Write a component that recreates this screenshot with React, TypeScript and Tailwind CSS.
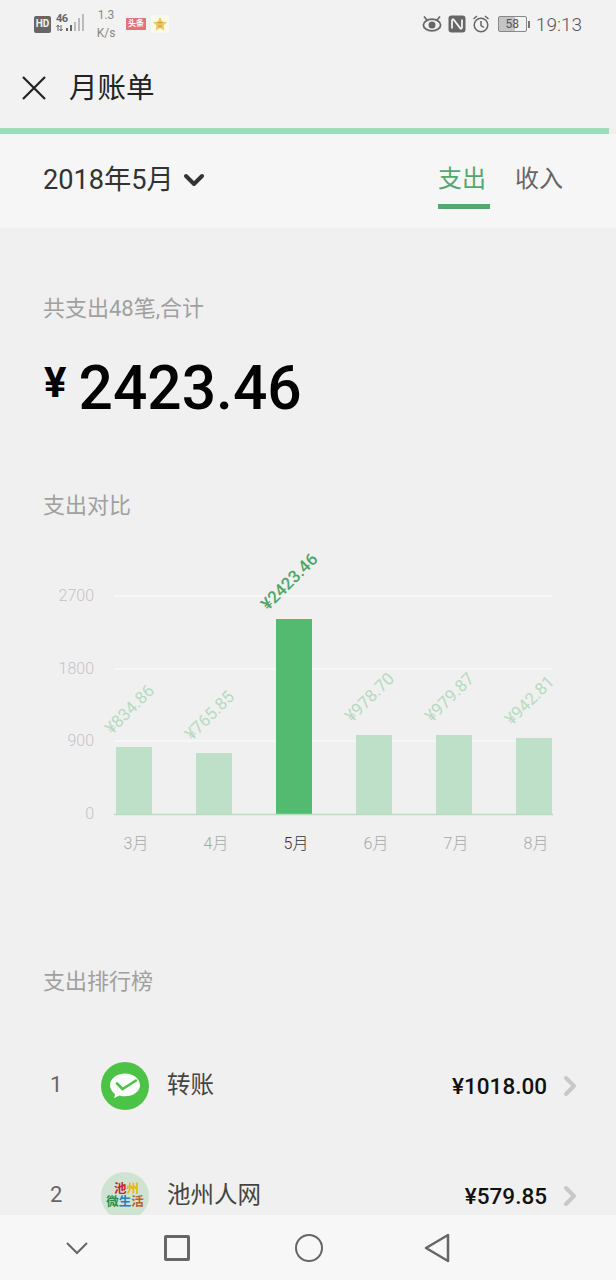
import { ChevronDown, ChevronRight } from "lucide-react";

const FONT = "font-['Roboto','Noto_Sans_CJK_SC',sans-serif]";

const bars = [
  { month: "3月", label: "¥834.86", top: 747, x: 116 },
  { month: "4月", label: "¥765.85", top: 753, x: 196 },
  { month: "5月", label: "¥2423.46", top: 619, x: 276, active: true },
  { month: "6月", label: "¥978.70", top: 735, x: 356 },
  { month: "7月", label: "¥979.87", top: 735, x: 436 },
  { month: "8月", label: "¥942.81", top: 738, x: 516 },
];

const ticks = [
  { value: "2700", y: 596 },
  { value: "1800", y: 669 },
  { value: "900", y: 741 },
  { value: "0", y: 814 },
];

function StatusBar() {
  return (
    <div className="flex h-[48px] items-center justify-between pl-[34px] pr-[34px] text-[#777]">
      <div className="flex items-center">
        <div className="flex h-[17px] w-[17px] items-center justify-center rounded-[2px] bg-[#666] text-[10px] font-bold leading-none text-[#f2f2f2]">
          HD
        </div>
        <svg width="30" height="20" viewBox="0 0 30 20" className="ml-[5px] mb-[2px]">
          <text x="0" y="9" fontSize="11" fontWeight="700" fill="#666" textLength="12">
            46
          </text>
          <path d="M2 12v6M0.500 14L2 12l1.500 2M5 12v6M3.500 16L5 18l1.500-2" fill="none" stroke="#666" strokeWidth="1" />
          <rect x="10" y="15" width="2" height="3" fill="#666" />
          <rect x="14" y="12" width="2" height="6" fill="#666" />
          <rect x="18" y="9" width="2" height="9" fill="#bbb" />
          <rect x="22" y="5" width="2" height="13" fill="#bbb" />
          <rect x="26" y="1" width="2" height="17" fill="#bbb" />
        </svg>
        <div className="ml-[10px] w-[20px] text-center text-[12px] leading-[18px] text-[#888]">
          1.3
          <br />
          K/s
        </div>
        <div className="ml-[10px] flex h-[12px] w-[20px] items-center justify-center bg-[#e8707a] text-[8px] font-bold leading-none text-white">
          头条
        </div>
        <div className="ml-[5px] flex h-[18px] w-[18px] items-center justify-center bg-[#fbf9ec]">
          <svg width="16" height="16" viewBox="0 0 24 24">
            <path
              d="M12 1.500l3.200 6.900 7.300.9-5.400 5.100 1.500 7.400L12 18.100l-6.600 3.700 1.500-7.400L1.500 9.300l7.300-.9z"
              fill="#eccb5b"
            />
            <path d="M8 10h8M9 14.500c2 1.500 4 1.500 6 0" stroke="#b99a3a" strokeWidth="1.500" fill="none" />
          </svg>
        </div>
      </div>
      <div className="flex items-center">
        <svg width="20" height="18" viewBox="0 0 20 18">
          <ellipse cx="10" cy="10" rx="8.600" ry="5.800" fill="none" stroke="#666" strokeWidth="1.800" />
          <circle cx="10" cy="10" r="3.500" fill="#666" />
          <path d="M2 1.500l3 3.500M18 1.500l-3 3.500" stroke="#666" strokeWidth="1.800" />
        </svg>
        <svg width="18" height="18" viewBox="0 0 18 18" className="ml-[6px]">
          <rect x="0.500" y="0.500" width="17" height="17" rx="3" fill="#666" />
          <path d="M4 4.500h1.500l7 9H14M4 4.500v9M14 4.500v9" fill="none" stroke="#f2f2f2" strokeWidth="1.800" />
        </svg>
        <svg width="18" height="18" viewBox="0 0 18 18" className="ml-[6px]">
          <circle cx="9" cy="10" r="6.800" fill="none" stroke="#666" strokeWidth="1.500" />
          <path d="M9 6v4.500l3 2M1.500 4L5 1M16.500 4L13 1" fill="none" stroke="#666" strokeWidth="1.500" />
        </svg>
        <div className="ml-[8px] flex h-[16px] w-[29px] items-center justify-center rounded-[2px] border border-[#888] bg-[linear-gradient(90deg,#c4c4c4_58%,transparent_58%)] text-[12px] leading-none text-[#555]">
          58
        </div>
        <div className="ml-[1px] h-[7px] w-[2px] bg-[#777]" />
        <div className="ml-[6px] text-[19px] font-light leading-none text-[#555]">19:13</div>
      </div>
    </div>
  );
}

function Chart() {
  return (
    <svg width="616" height="320" viewBox="0 540 616 320" className="block">
      {ticks.slice(0, 3).map((t) => (
        <line key={t.value} x1="114" x2="553" y1={t.y} y2={t.y} stroke="#f6f6f6" strokeWidth="2" />
      ))}
      {ticks.map((t) => (
        <text key={t.value} x="94" y={t.y + 5} textAnchor="end" fontSize="16" fontWeight="300" fill="#c4c4c4">
          {t.value}
        </text>
      ))}
      {bars.map((b) => (
        <rect
          key={b.month}
          x={b.x}
          y={b.top}
          width="36"
          height={814 - b.top}
          fill={b.active ? "#52bb6f" : "#bfe0c8"}
        />
      ))}
      <line x1="114" x2="553" y1="814.500" y2="814.500" stroke="#b4dfc1" strokeWidth="1.500" />
      {bars.map((b) => {
        const lx = b.active ? b.x - 8 : b.x - 4;
        const ly = b.active ? b.top - 8 : b.top - 12;
        return (
          <text
            key={b.label}
            x={lx}
            y={ly}
            fontSize="17"
            fontWeight={b.active ? 500 : 400}
            fill={b.active ? "#4fa56a" : "#b6dbc1"}
            transform={`rotate(-45 ${lx} ${ly})`}
          >
            {b.label}
          </text>
        );
      })}
      {bars.map((b) => (
        <text
          key={b.month}
          x={b.x + 20}
          y="849"
          textAnchor="middle"
          fontSize="16"
          fontWeight="300"
          fill={b.active ? "#333" : "#a8a8a8"}
        >
          {b.month}
        </text>
      ))}
    </svg>
  );
}

function RankRow({
  rank,
  name,
  amount,
  icon,
}: {
  rank: number;
  name: string;
  amount: string;
  icon: React.ReactNode;
}) {
  return (
    <div className="flex h-[110px] shrink-0 items-start pl-[50px] pr-[30px]">
      <div className="w-[51px] pt-[8px] text-[22px] leading-[30px] text-[#666]">{rank}</div>
      {icon}
      <div className="ml-[18px] pt-[6px] text-[23.5px] leading-[34px] text-[#444]">{name}</div>
      <div className="ml-auto pt-[9px] text-[22.500px] font-medium leading-[30px] text-[#111]">{amount}</div>
      <ChevronRight size={32} strokeWidth={3} className="mb-auto ml-[7px] mt-[8px] text-[#c8c8c8]" />
    </div>
  );
}

export default function App() {
  return (
    <div className={`flex h-[1280px] w-[616px] flex-col overflow-hidden bg-[#f0f0f0] ${FONT}`}>
      <div className="shrink-0 bg-[#f2f2f2]">
        <StatusBar />
        <div className="flex h-[80px] items-center pl-[21px]">
          <svg width="26" height="26" viewBox="0 0 26 26" className="mb-[1px]">
            <path d="M2 2l22 22M24 2L2 24" fill="none" stroke="#222" strokeWidth="2.200" />
          </svg>
          <div className="ml-[22px] mt-[2px] text-[28.500px] leading-none text-[#222]">月账单</div>
        </div>
      </div>
      <div className="h-[6px] w-[609px] shrink-0 bg-[#9cdcbb]" />
      <div className="flex h-[94px] shrink-0 items-start justify-between bg-[#f6f6f6] pl-[43px] pr-[53px]">
        <div className="flex items-center pt-[28px] text-[#333]">
          <span className="text-[27.200px] leading-[36px]">2018年5月</span>
          <ChevronDown size={32} strokeWidth={3} className="ml-[4px]" />
        </div>
        <div className="flex gap-[25px] text-[24px] leading-[36px]">
          <div className="flex h-[75px] w-[52px] flex-col items-start border-b-[5px] border-[#55a76f] pt-[27px] text-[#55a76f]">
            支出
          </div>
          <div className="w-[48px] whitespace-nowrap pt-[27px] text-left text-[#666]">收入</div>
        </div>
      </div>
      <div className="flex min-h-0 flex-1 flex-col overflow-hidden">
        <div className="pl-[43px] pt-[65px] text-[22px] leading-[32px] text-[#a0a0a0]">共支出48笔,合计</div>
        <div className="mt-[29px] flex items-start pl-[44px] text-black">
          <span className="h-[70px] pt-[7px] text-[42px] font-bold leading-[44px]">¥</span>
          <span className="ml-[12px] text-[60.500px] font-medium leading-[70px]">2423.46</span>
        </div>
        <div className="pl-[43px] pt-[66px] text-[22px] leading-[32px] text-[#a0a0a0]">支出对比</div>
        <div className="mt-[18px]">
          <Chart />
        </div>
        <div className="pl-[43px] pt-[106px] text-[22px] leading-[32px] text-[#a0a0a0]">支出排行榜</div>
        <div className="mt-[64px] flex flex-col">
          <RankRow
            rank={1}
            name="转账"
            amount="¥1018.00"
            icon={
              <svg width="48" height="48" viewBox="0 0 48 48" className="shrink-0">
                <circle cx="24" cy="24" r="24" fill="#4cc247" />
                <path
                  d="M24 11.500c-8.300 0-15 5.200-15 11.700 0 3.500 1.900 6.600 5 8.700l-.8 4.300 5-2.800c1.900.6 3.800.9 5.800.9 8.300 0 15-5 15-11.100s-6.700-11.700-15-11.700z"
                  fill="#fff"
                />
                <path d="M16 21.500l5.500 5.500L35 18.500" fill="none" stroke="#4cc247" strokeWidth="2.600" strokeLinecap="round" />
              </svg>
            }
          />
          <RankRow
            rank={2}
            name="池州人网"
            amount="¥579.85"
            icon={
              <div className="flex h-[48px] w-[48px] shrink-0 flex-col items-center justify-start rounded-full bg-[#cfe3d3] pt-[10px] text-[12.500px] font-bold leading-[13px]">
                <div className="ml-[3px]">
                  <span className="text-[#c8232c]">池</span>
                  <span className="text-[#eab308]">州</span>
                </div>
                <div className="whitespace-nowrap">
                  <span className="text-[#1f8f4e]">微</span>
                  <span className="text-[#2b7bc0]">生</span>
                  <span className="text-[#b9602c]">活</span>
                </div>
              </div>
            }
          />
        </div>
      </div>
      <div className="flex h-[65px] shrink-0 items-center bg-[#f7f7f7] pl-[64px]">
        <svg width="26" height="16" viewBox="0 0 26 16">
          <path d="M3 3l10 10L23 3" fill="none" stroke="#666" strokeWidth="2" />
        </svg>
        <div className="ml-[74px] h-[26px] w-[26px] rounded-[2px] border-[3px] border-[#666]" />
        <div className="ml-[105px] h-[28px] w-[28px] rounded-full border-[2.500px] border-[#666]" />
        <svg width="28" height="30" viewBox="0 0 28 30" className="ml-[100px]">
          <path d="M25 2v26L3 15z" fill="none" stroke="#666" strokeWidth="2.500" strokeLinejoin="round" />
        </svg>
      </div>
    </div>
  );
}
